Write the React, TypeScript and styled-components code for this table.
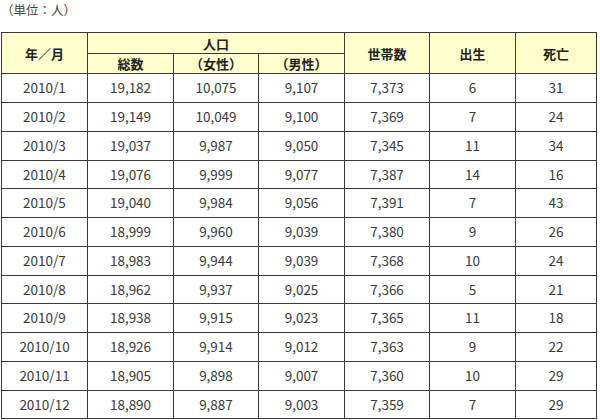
import React from "react";
import styled, { createGlobalStyle } from "styled-components";

const Global = createGlobalStyle`
  html, body { margin: 0; padding: 0; background: #fff; }
  body { font-family: "Noto Sans CJK JP", "Noto Sans", sans-serif; color: #333; }
`;

const Page = styled.div`
  width: 600px;
  height: 420px;
  overflow: hidden;
  padding: 2px 0 0 1px;
  box-sizing: border-box;
`;

const Unit = styled.div`
  font-size: 12.5px;
  line-height: 16px;
  color: #444;
  height: 30px;
`;

const Table = styled.table`
  border-collapse: collapse;
  table-layout: fixed;
  width: 595px;
  font-size: 13px;
`;

const HeadCell = styled.th<{ $h: number }>`
  background: #ffffcc;
  border: 1px solid #3a3a3a;
  height: ${(p) => p.$h}px;
  padding: 0;
  font-weight: bold;
  font-size: 13px;
  color: #222;
  text-align: center;
  vertical-align: middle;
  line-height: 1;
`;

const Cell = styled.td<{ $h: number }>`
  border: 1px solid #3a3a3a;
  height: ${(p) => p.$h}px;
  padding: 0;
  text-align: center;
  vertical-align: middle;
  color: #3a3a3a;
  font-size: 13.5px;
  line-height: 1;
`;

const rows: string[][] = [
  ["2010/1", "19,182", "10,075", "9,107", "7,373", "6", "31"],
  ["2010/2", "19,149", "10,049", "9,100", "7,369", "7", "24"],
  ["2010/3", "19,037", "9,987", "9,050", "7,345", "11", "34"],
  ["2010/4", "19,076", "9,999", "9,077", "7,387", "14", "16"],
  ["2010/5", "19,040", "9,984", "9,056", "7,391", "7", "43"],
  ["2010/6", "18,999", "9,960", "9,039", "7,380", "9", "26"],
  ["2010/7", "18,983", "9,944", "9,039", "7,368", "10", "24"],
  ["2010/8", "18,962", "9,937", "9,025", "7,366", "5", "21"],
  ["2010/9", "18,938", "9,915", "9,023", "7,365", "11", "18"],
  ["2010/10", "18,926", "9,914", "9,012", "7,363", "9", "22"],
  ["2010/11", "18,905", "9,898", "9,007", "7,360", "10", "29"],
  ["2010/12", "18,890", "9,887", "9,003", "7,359", "7", "29"],
];

const widths = [86, 86, 85, 86, 85, 86, 81];

export default function App() {
  return (
    <Page>
      <Global />
      <Unit>（単位：人）</Unit>
      <Table>
        <colgroup>
          {widths.map((w, i) => (
            <col key={i} style={{ width: w }} />
          ))}
        </colgroup>
        <thead>
          <tr>
            <HeadCell $h={20} rowSpan={2}>年／月</HeadCell>
            <HeadCell $h={20} colSpan={3}>人口</HeadCell>
            <HeadCell $h={20} rowSpan={2}>世帯数</HeadCell>
            <HeadCell $h={20} rowSpan={2}>出生</HeadCell>
            <HeadCell $h={20} rowSpan={2}>死亡</HeadCell>
          </tr>
          <tr>
            <HeadCell $h={19}>総数</HeadCell>
            <HeadCell $h={19}>（女性）</HeadCell>
            <HeadCell $h={19}>（男性）</HeadCell>
          </tr>
        </thead>
        <tbody>
          {rows.map((r, i) => (
            <tr key={i}>
              {r.map((c, j) => (
                <Cell key={j} $h={i % 4 === 3 ? 27 : 28}>{c}</Cell>
              ))}
            </tr>
          ))}
        </tbody>
      </Table>
    </Page>
  );
}
